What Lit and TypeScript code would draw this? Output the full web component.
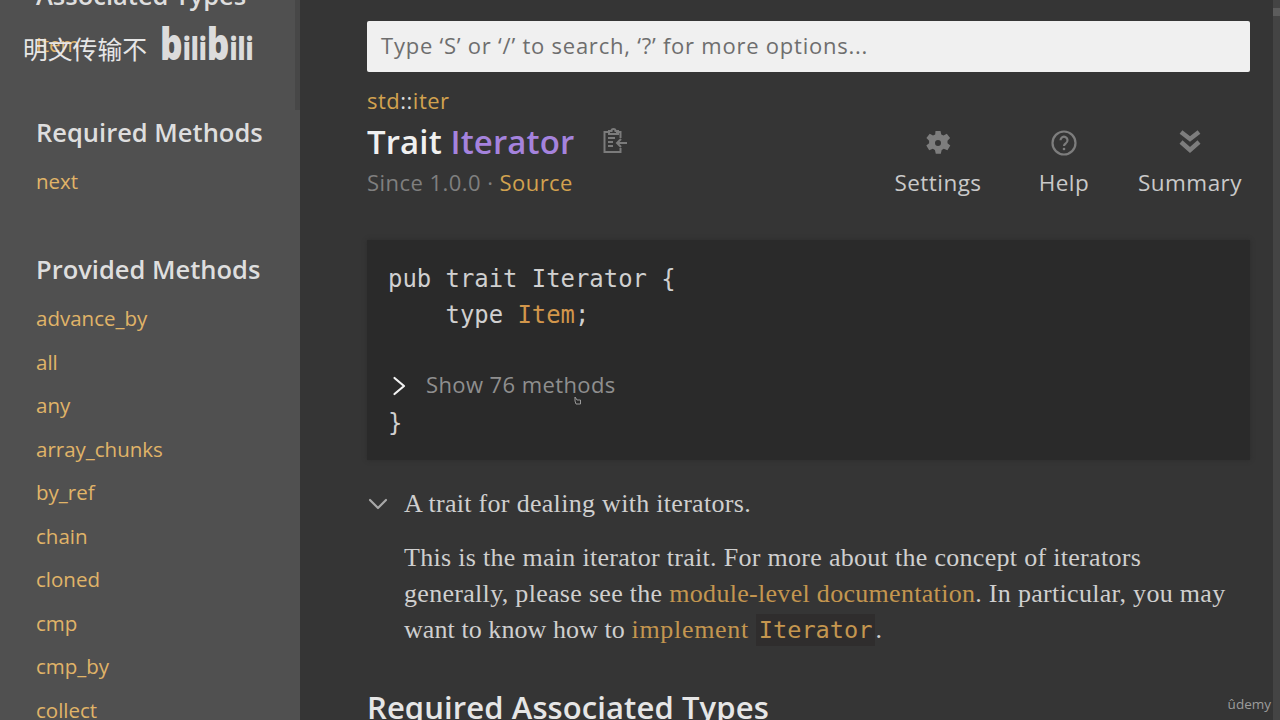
import { LitElement, html, css, svg } from "lit";
import { customElement } from "lit/decorators.js";

const provided = ["advance_by", "all", "any", "array_chunks", "by_ref", "chain", "cloned", "cmp", "cmp_by", "collect"];

const chevron = (points: string) => svg`<polyline points=${points} fill="none" stroke="currentColor" stroke-width="2.2" stroke-linecap="round" stroke-linejoin="round"></polyline>`;

@customElement("app-root")
export class AppRoot extends LitElement {
  static styles = css`
    :host {
      display: block;
      width: 1280px;
      height: 720px;
      overflow: hidden;
      position: relative;
      background: #353535;
      color: #ddd;
      font-family: "Open Sans", "Noto Sans", sans-serif;
    }
    .page {
      display: flex;
      height: 720px;
    }
    .sidebar {
      width: 300px;
      flex: none;
      height: 720px;
      overflow: hidden;
      background: #505050;
      box-sizing: border-box;
      padding: 0 0 0 36px;
      position: relative;
    }
    .sidebar h3 {
      margin: 0;
      height: 30px;
      line-height: 30px;
      font-size: 25.5px;
      font-weight: 600;
      color: #dedede;
      white-space: nowrap;
    }
    .sidebar .cut {
      margin-top: -20px;
    }
    .sidebar .first {
      margin-top: 50px;
    }
    .sidebar .second {
      margin-top: 51px;
    }
    .sidebar ul {
      list-style: none;
      margin: 0;
      padding: 13px 0 0;
    }
    .sidebar li {
      height: 43.5px;
      line-height: 43px;
      font-size: 20.5px;
      color: #e0b468;
    }
    .thumb {
      position: absolute;
      right: 0;
      top: 0;
      width: 5px;
      height: 110px;
      background: #474747;
    }
    .main {
      flex: 1;
      min-width: 0;
      padding: 21px 30px 0 67px;
    }
    .search {
      height: 51px;
      box-sizing: border-box;
      background: #f0f0f0;
      border-radius: 2px;
      color: #6e6e6e;
      font-size: 22px;
      line-height: 49px;
      padding-left: 14px;
      letter-spacing: 0.77px;
    }
    .crumb {
      margin-top: 15px;
      height: 26px;
      line-height: 26px;
      font-size: 22px;
      color: #d2a24f;
      letter-spacing: 0.5px;
    }
    .crumb span {
      color: #ddd;
    }
    .head {
      display: flex;
      justify-content: space-between;
      align-items: flex-start;
    }
    .title-row {
      display: flex;
      align-items: center;
      height: 42px;
      margin-top: 7px;
      gap: 28px;
    }
    h1 {
      margin: 0;
      font-size: 33px;
      font-weight: 600;
      color: #f0f0f0;
      letter-spacing: 0.1px;
    }
    h1 span {
      color: #a583dd;
    }
    .since {
      height: 30px;
      line-height: 30px;
      margin-top: 5px;
      font-size: 22px;
      color: #7f7f7f;
      letter-spacing: 0.45px;
    }
    .since a {
      color: #d2a24f;
    }
    .tools {
      display: flex;
      gap: 24px;
      margin: 15px 9px 0 0;
    }
    .tool {
      width: 102px;
      display: flex;
      flex-direction: column;
      align-items: center;
      gap: 10px;
      font-size: 22.5px;
      line-height: 30px;
      letter-spacing: 0.45px;
      color: #c9c9c9;
    }
    .tool svg {
      width: 30px;
      height: 30px;
      color: #7d7d7d;
    }
    .code {
      margin-top: 42px;
      height: 220px;
      box-sizing: border-box;
      background: #2a2a2a;
      box-shadow: 0 0 4px #2c2c2c;
      padding: 21px 21px 0;
      font-family: "DejaVu Sans Mono", monospace;
      font-size: 24px;
      line-height: 36px;
      color: #d0d0d0;
    }
    .code .line {
      height: 36px;
      font-size: 23.9px;
      white-space: pre;
    }
    .code b {
      font-weight: 400;
      color: #d2964b;
    }
    .toggle {
      display: flex;
      align-items: center;
      height: 36px;
      margin: 33px 0 3px;
      gap: 16px;
      color: #8f8f8f;
      font-family: "Open Sans", sans-serif;
      font-size: 22px;
      letter-spacing: 0.4px;
    }
    .toggle svg {
      width: 20px;
      height: 20px;
      margin: 4px 0 0 2px;
      color: #f2f2f2;
    }
    .cursor {
      position: absolute;
      left: 574px;
      top: 396px;
      width: 8px;
      height: 9px;
    }
    .doc {
      display: flex;
      margin-top: 26px;
      gap: 15px;
      font-family: "Liberation Serif", serif;
      color: #cfcfcf;
    }
    .doc > svg {
      width: 22px;
      height: 22px;
      flex: none;
      margin-top: 7px;
      color: #a9a9a9;
    }
    .doc p {
      margin: 0;
      font-size: 26px;
      line-height: 36px;
      letter-spacing: 0.3px;
      white-space: nowrap;
    }
    .doc .para {
      margin-top: 18px;
    }
    .doc a {
      color: #c4964f;
    }
    .doc .tight {
      letter-spacing: 0.07px;
    }
    .doc .wide {
      letter-spacing: 0.7px;
    }
    .doc code {
      font-family: "DejaVu Sans Mono", monospace;
      font-size: 23.6px;
      letter-spacing: 0;
      background: #2f2d2d;
      padding: 2px 3px;
    }
    h2 {
      margin: 39px 0 0;
      font-size: 31px;
      line-height: 40px;
      font-weight: 600;
      color: #e6e6e6;
      letter-spacing: 0.1px;
    }
    .mark {
      position: absolute;
      left: 23px;
      top: 33px;
      font-family: "Noto Sans CJK SC", sans-serif;
      font-size: 24.8px;
      line-height: 30px;
      color: #e6e6e6;
    }
    .logo {
      position: absolute;
      left: 160px;
      top: 18px;
      display: flex;
      align-items: baseline;
      height: 50px;
      font-family: "Open Sans", sans-serif;
      font-weight: 800;
      font-size: 31px;
      line-height: 50px;
      color: #dcdcdc;
      transform: scaleX(0.8);
      transform-origin: left;
    }
    .logo span {
      font-size: 44px;
    }
    .udemy {
      position: absolute;
      right: 9px;
      top: 695px;
      font-size: 13.5px;
      line-height: 18px;
      color: #9c9c9c;
    }
    .scrollbar {
      position: absolute;
      right: 0;
      top: 0;
      width: 7px;
      height: 720px;
      background: #444;
    }
    .scrollbar div {
      margin-top: 8px;
      height: 8px;
      background: #5c5c5c;
    }
  `;

  render() {
    return html`
      <div class="page">
        <aside class="sidebar">
          <h3 class="cut">Associated Types</h3>
          <ul><li>Item</li></ul>
          <h3 class="first">Required Methods</h3>
          <ul><li>next</li></ul>
          <h3 class="second">Provided Methods</h3>
          <ul>${provided.map((m) => html`<li>${m}</li>`)}</ul>
          <div class="thumb"></div>
        </aside>
        <main class="main">
          <div class="search">Type ‘S’ or ‘/’ to search, ‘?’ for more options...</div>
          <div class="crumb">std<span>::</span>iter</div>
          <div class="head">
            <div>
              <div class="title-row">
                <h1>Trait <span>Iterator</span></h1>
                <svg width="26" height="28" viewBox="0 0 26 28" fill="none" stroke="#7b7b7b" stroke-width="2">
                  <path d="M7 5H2.5v20h16v-4M18.5 11V5H14" />
                  <path d="M7 7V4h2.5a2 2 0 0 1 4 0H16v3z" />
                  <path d="M6 11h7M6 15h5M6 19h5" />
                  <path d="M25 16h-10M19 12l-4 4 4 4" />
                </svg>
              </div>
              <div class="since">Since 1.0.0 · <a>Source</a></div>
            </div>
            <div class="tools">
              <div class="tool">
                <svg viewBox="0 0 30 30">
                  <path fill="currentColor" fill-rule="evenodd" d="M12.5 2h5l.8 3.6 2.2 1 3.3-1.8 3.3 4.3-2.6 2.7v2.4l2.8 2.4-2.9 4.7-3.6-1.5-2.1 1.2-.9 3.8h-5l-.9-3.8-2.1-1.2-3.6 1.5L3.3 16.6l2.8-2.4v-2.4L3.4 9.1l3.3-4.3L10 6.6l2.2-1zM15 11a3 3 0 1 0 0 6 3 3 0 0 0 0-6z" transform="translate(0 1)" />
                </svg>
                Settings
              </div>
              <div class="tool">
                <svg viewBox="0 0 30 30" fill="none" stroke="currentColor">
                  <circle cx="15" cy="15" r="11.5" stroke-width="2.2" />
                  <path d="M11.5 12.2a3.5 3.5 0 1 1 5.4 3c-1.3.8-1.9 1.4-1.9 2.8" stroke-width="2.2" />
                  <circle cx="15" cy="21" r="1.3" fill="currentColor" stroke="none" />
                </svg>
                Help
              </div>
              <div class="tool">
                <svg viewBox="0 0 30 30" fill="none" stroke="currentColor" stroke-width="4.5">
                  <path d="M6 4l9 7 9-7M6 14l9 8 9-8" />
                </svg>
                Summary
              </div>
            </div>
          </div>
          <div class="code">
            <div class="line">pub trait Iterator {</div>
            <div class="line">    type <b>Item</b>;</div>
            <div class="toggle">
              <svg viewBox="0 0 20 20">${chevron("4.5,2 14,10 4.5,18")}</svg>
              Show 76 methods
            </div>
            <div class="line">}</div>
          </div>
          <div class="doc">
            <svg viewBox="0 0 22 22">${chevron("3,7 11,15 19,7")}</svg>
            <div>
              <p>A trait for dealing with iterators.</p>
              <p class="para">
                This is the main iterator trait. For more about the concept of iterators<br />
                generally, please see the <a>module-level documentation</a>. In particular, you may<br />
                <span class="tight">want to know how to </span><a><span class="wide">implement</span> <code>Iterator</code></a>.
              </p>
            </div>
          </div>
          <h2>Required Associated Types</h2>
        </main>
      </div>
      <div class="scrollbar"><div></div></div>
      <svg class="cursor" viewBox="0 0 8 9" fill="none" stroke="#9a9a9a" stroke-width="1"><path d="M1 1l2 3h3.5v4H2L1 5z" /></svg>
      <div class="mark">明文传输不</div>
      <div class="logo"><span>b</span>ili<span>b</span>ili</div>
      <div class="udemy">ûdemy</div>
    `;
  }
}
